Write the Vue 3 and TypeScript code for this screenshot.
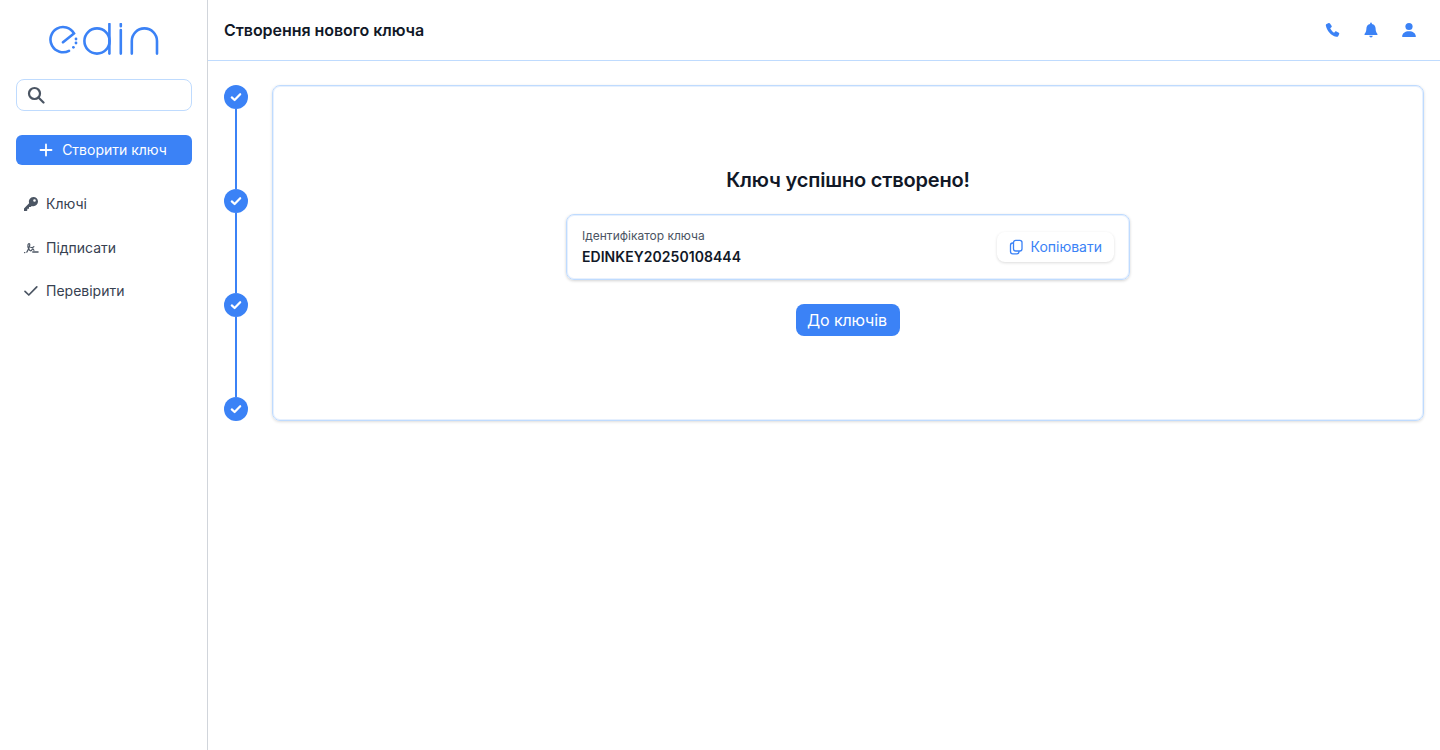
<script setup lang="ts">
const nav = [
  { label: 'Ключі', icon: 'key' },
  { label: 'Підписати', icon: 'sign' },
  { label: 'Перевірити', icon: 'check' },
]
const steps = [1, 2, 3, 4]
</script>

<template>
  <div class="app">
    <aside class="sidebar">
      <div class="logo">
        <svg width="110" height="32" viewBox="0 0 110 32" fill="none" stroke="#3b82f6" stroke-width="2.6" stroke-linecap="round">
          <path d="M14 19.3 L25 10.4 A12.6 12.6 0 1 0 20 27.8" />
          <circle cx="27" cy="16" r="1.4" fill="#3b82f6" stroke="none" />
          <circle cx="27" cy="20" r="1.4" fill="#3b82f6" stroke="none" />
          <circle cx="24.400" cy="24.300" r="1.400" fill="#3b82f6" stroke="none" />
          <circle cx="48" cy="18" r="12.6" />
          <path d="M60.400 1 V30.600" />
          <path d="M71.800 1 V3.200 M71.800 7 V30.600" />
          <path d="M82.800 30.600 V18 A12.600 12.600 0 0 1 108 18 V30.600" />
        </svg>
      </div>
      <div class="search">
        <svg width="18" height="18" viewBox="0 0 18 18" fill="none" stroke="#4b5563" stroke-width="2.200">
          <circle cx="7.500" cy="7.500" r="5.500" />
          <path d="M11.500 11.500 L16.500 16.500" stroke-linecap="round" />
        </svg>
      </div>
      <button class="create">
        <svg width="14" height="14" viewBox="0 0 14 14" stroke="#fff" stroke-width="1.800" stroke-linecap="round"><path d="M7 1.500V12.500M1.500 7H12.500" /></svg>
        <span>Створити ключ</span>
      </button>
      <nav class="nav">
        <a v-for="item in nav" :key="item.label" class="nav-item">
          <span class="nav-icon">
            <svg v-if="item.icon === 'key'" width="16" height="16" viewBox="0 0 16 16" fill="#4b5563">
              <path fill-rule="evenodd" d="M10.400 1a4.600 4.600 0 0 1 0 9.200c-.6 0-1.100-.1-1.600-.3L7.700 11H6v1.700H4.300v1.700L3.600 15H1v-2.600l5.100-5.200a4.600 4.600 0 0 1 4.300-6.200zm1.100 2.200a1.300 1.300 0 1 0 0 2.600 1.300 1.300 0 0 0 0-2.600z" />
            </svg>
            <svg v-else-if="item.icon === 'sign'" width="16" height="16" viewBox="0 0 16 16" fill="none" stroke="#4b5563" stroke-width="1.200" stroke-linecap="round">
              <path d="M1.500 12.600h.4M3.800 12.200c1.400-2 2.700-5 3-7.200C7 3.300 5.500 3 5 4.700 4.400 7 6.200 10.700 7.800 10.900c1.200.1 1-2 2-2.100.7 0 .4 1.400 1.200 1.400" />
              <path d="M7.600 7.300c1.500.5 2.600.3 3.300-.6" />
              <path d="M9.800 11.900h5.200" stroke-width="1.500" />
            </svg>
            <svg v-else width="16" height="16" viewBox="0 0 16 16" fill="none" stroke="#4b5563" stroke-width="1.700" stroke-linecap="round" stroke-linejoin="round">
              <path d="M2 8.400 L5.800 12 L13.800 3.800" />
            </svg>
          </span>
          <span>{{ item.label }}</span>
        </a>
      </nav>
    </aside>

    <div class="main">
      <header class="topbar">
        <h1>Створення нового ключа</h1>
        <div class="top-icons">
          <svg width="16" height="16" viewBox="0 0 16 16" fill="#3b82f6">
            <path d="M3.700 1 1.600 1.900C.900 2.200.700 3 .900 3.800c1.200 5.100 5.100 9.900 10.300 11 .900.200 1.700-.100 2.100-.900l.900-1.800c.200-.500.100-1-.400-1.300l-2.400-1.400c-.400-.200-.900-.200-1.200.200l-1.100 1.200C7.500 9.900 6 8.100 5.200 6.300l1.200-1c.4-.3.500-.8.300-1.300L5 1.500C4.700 1 4.200.800 3.700 1z" />
          </svg>
          <svg width="16" height="16" viewBox="0 0 16 16" fill="#3b82f6">
            <path d="M8 .6c-.5 0-.9.400-.9.900v.4C4.800 2.300 3.400 4.200 3.400 6.500c0 2.800-.8 4.300-1.900 5.600-.2.300 0 .8.400.8h12.200c.4 0 .6-.5.400-.8-1.100-1.300-1.900-2.800-1.900-5.600 0-2.300-1.400-4.200-3.700-4.600v-.4c0-.5-.4-.9-.9-.9z" />
            <path d="M6.300 13.800h3.400a1.700 1.700 0 0 1-3.400 0z" />
          </svg>
          <svg width="16" height="16" viewBox="0 0 16 16" fill="#3b82f6">
            <circle cx="8" cy="4.500" r="3.600" />
            <path d="M1.700 15c-.4 0-.7-.3-.6-.7C1.500 11.300 4 9.300 8 9.300s6.500 2 6.900 5c.1.400-.2.700-.6.700z" />
          </svg>
        </div>
      </header>

      <main class="content">
        <div class="stepper">
          <template v-for="(s, i) in steps" :key="s">
            <div class="dot">
              <svg width="12" height="12" viewBox="0 0 12 12" fill="none" stroke="#fff" stroke-width="2.200" stroke-linecap="round" stroke-linejoin="round">
                <path d="M1.800 6.400 4.600 9 10.200 3.200" />
              </svg>
            </div>
            <div v-if="i < steps.length - 1" class="line"></div>
          </template>
        </div>

        <section class="card">
          <h2>Ключ успішно створено!</h2>
          <div class="key-box">
            <div class="key-info">
              <div class="key-label">Ідентифікатор ключа</div>
              <div class="key-value">EDINKEY20250108444</div>
            </div>
            <button class="copy">
              <svg width="16" height="16" viewBox="0 0 16 16" fill="none" stroke="#3b82f6" stroke-width="1.300" stroke-linejoin="round">
                <rect x="5.500" y="1.300" width="8.500" height="10.700" rx="2.200" />
                <path d="M5.500 4h-.8c-1.200 0-2.200 1-2.200 2.200v6.400c0 1.200 1 2.200 2.200 2.200h4.100c1.200 0 2.200-1 2.200-2.200V12" />
              </svg>
              <span>Копіювати</span>
            </button>
          </div>
          <button class="primary">До ключів</button>
        </section>
      </main>
    </div>
  </div>
</template>

<style>
html, body { margin: 0; background: #fff; }
</style>

<style scoped>
.app {
  display: flex;
  min-height: 750px;
  font-family: Inter, "Liberation Sans", sans-serif;
  color: #111827;
  background: #fff;
}
.sidebar {
  width: 207px;
  flex: none;
  box-sizing: content-box;
  border-right: 1px solid #d1d5db;
  display: flex;
  flex-direction: column;
  padding: 0;
}
.logo {
  height: 32px;
  margin: 23px 0 24px 49px;
  display: flex;
}
.search {
  box-sizing: border-box;
  height: 32px;
  margin: 0 15px 0 16px;
  border: 1px solid #bfdbfe;
  border-radius: 8px;
  display: flex;
  align-items: center;
  padding-left: 10px;
}
.create {
  box-sizing: border-box;
  height: 30px;
  margin: 24px 15px 0 16px;
  padding: 0 2px 0 0;
  border: 0;
  border-radius: 6px;
  background: #3b82f6;
  color: #fff;
  font: 400 14px/20px Inter, sans-serif;
  display: flex;
  align-items: center;
  justify-content: center;
  gap: 9px;
}
.nav {
  margin-top: 17.25px;
  display: flex;
  flex-direction: column;
}
.nav-item {
  height: 43.5px;
  padding-left: 23px;
  display: flex;
  align-items: center;
  gap: 7px;
  font-size: 14px;
  line-height: 20px;
  color: #374151;
}
.nav-icon {
  width: 16px;
  height: 16px;
  display: flex;
  align-items: center;
  justify-content: center;
}
.main {
  flex: 1;
  min-width: 0;
  display: flex;
  flex-direction: column;
}
.topbar {
  box-sizing: border-box;
  height: 61px;
  border-bottom: 1px solid #bfdbfe;
  padding: 0 23px 0 16px;
  display: flex;
  align-items: center;
  justify-content: space-between;
}
.topbar h1 {
  margin: 0;
  font-size: 16px;
  line-height: 24px;
  font-weight: 600;
  letter-spacing: -0.05px;
  color: #111827;
}
.top-icons {
  display: flex;
  gap: 22px;
  align-items: center;
}
.content {
  display: flex;
  align-items: stretch;
  gap: 24px;
  padding: 24px 16px;
}
.stepper {
  width: 24px;
  flex: none;
  display: flex;
  flex-direction: column;
  align-items: center;
}
.dot {
  width: 24px;
  height: 24px;
  border-radius: 50%;
  background: #3b82f6;
  display: flex;
  align-items: center;
  justify-content: center;
}
.line {
  width: 2px;
  height: 80px;
  background: #3b82f6;
}
.card {
  flex: 1;
  box-sizing: border-box;
  border: 1px solid #bfdbfe;
  border-radius: 8px;
  box-shadow: 0 1px 3px rgba(0, 0, 0, 0.14), inset 0 0 0 1px #e6f0fe;
  padding-top: 80px;
  display: flex;
  flex-direction: column;
  align-items: center;
}
.card h2 {
  margin: 0;
  font-size: 20px;
  line-height: 28px;
  font-weight: 600;
  letter-spacing: -0.18px;
  color: #111827;
}
.key-box {
  box-sizing: border-box;
  width: 564px;
  height: 66px;
  margin-top: 20px;
  border: 1px solid #bfdbfe;
  border-radius: 8px;
  box-shadow: 0 1px 3px rgba(0, 0, 0, 0.18), inset 0 0 0 1px #e6f0fe;
  padding: 0 15px;
  display: flex;
  align-items: center;
  justify-content: space-between;
}
.key-label {
  font-size: 12px;
  line-height: 16px;
  color: #4b5563;
}
.key-value {
  margin-top: 3px;
  font-size: 14px;
  line-height: 20px;
  font-weight: 600;
  letter-spacing: 0.05px;
  color: #111827;
}
.key-info {
  padding-top: 1px;
}
.copy {
  height: 30px;
  padding: 0 12px 0 11px;
  border: 0;
  border-radius: 8px;
  background: #fff;
  box-shadow: 0 1px 3px rgba(0, 0, 0, 0.14);
  color: #3b82f6;
  font: 400 14px/20px Inter, sans-serif;
  display: flex;
  align-items: center;
  gap: 7px;
}
.primary {
  width: 104px;
  height: 32px;
  margin-top: 24px;
  padding: 0 2px 0 0;
  border: 0;
  border-radius: 8px;
  background: #3b82f6;
  color: #fff;
  font: 400 16px/24px Inter, sans-serif;
  letter-spacing: -0.1px;
}
</style>
